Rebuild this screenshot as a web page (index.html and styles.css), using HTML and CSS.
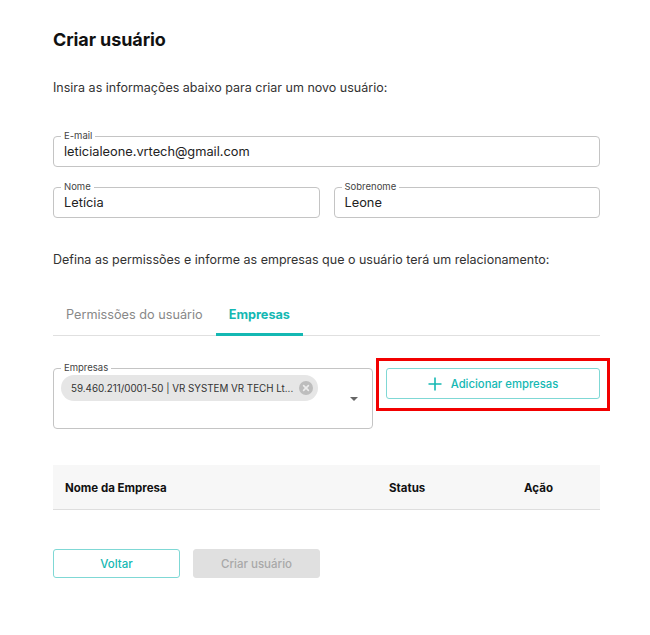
FILE: index.html
```html
<!DOCTYPE html>
<html lang="pt-BR">
<head>
<meta charset="utf-8">
<link rel="stylesheet" href="styles.css">
</head>
<body>
<main class="page">
  <h1 class="title">Criar usuário</h1>
  <p class="lead">Insira as informações abaixo para criar um novo usuário:</p>

  <fieldset class="field field-full">
    <legend>E-mail</legend>
    <div class="value">leticialeone.vrtech@gmail.com</div>
  </fieldset>

  <div class="row2">
    <fieldset class="field">
      <legend>Nome</legend>
      <div class="value">Letícia</div>
    </fieldset>
    <fieldset class="field">
      <legend>Sobrenome</legend>
      <div class="value">Leone</div>
    </fieldset>
  </div>

  <p class="lead lead2">Defina as permissões e informe as empresas que o usuário terá um relacionamento:</p>

  <div class="tabs">
    <div class="tab">Permissões do usuário</div>
    <div class="tab active">Empresas</div>
  </div>

  <div class="company-row">
    <fieldset class="field select">
      <legend>Empresas</legend>
      <div class="chip">
        <span class="chip-text">59.460.211/0001-50 | VR SYSTEM VR TECH Lt...</span>
        <svg class="chip-x" width="14" height="14" viewBox="0 0 14 14"><circle cx="7" cy="7" r="7" fill="#bdbdbd"/><path d="M4.6 4.6 L9.4 9.4 M9.4 4.6 L4.6 9.4" stroke="#ececec" stroke-width="1.6" stroke-linecap="round"/></svg>
      </div>
      <svg class="caret" width="8" height="4" viewBox="0 0 8 4"><path d="M0 0 H8 L4 4 Z" fill="#666"/></svg>
    </fieldset>
    <div class="add-wrap">
      <button class="btn-add">
        <svg width="14" height="14" viewBox="0 0 14 14"><path d="M7 0.5 V13.5 M0.5 7 H13.5" stroke="#14b8b3" stroke-width="1.6"/></svg>
        <span>Adicionar empresas</span>
      </button>
      <div class="highlight"></div>
    </div>
  </div>

  <div class="table-head">
    <div class="th th-name">Nome da Empresa</div>
    <div class="th th-status">Status</div>
    <div class="th th-action">Ação</div>
  </div>

  <div class="actions">
    <button class="btn btn-outline">Voltar</button>
    <button class="btn btn-disabled">Criar usuário</button>
  </div>
</main>
</body>
</html>
```

FILE: styles.css
```css
* { box-sizing: border-box; }
html, body { margin: 0; padding: 0; background: #fff; }
body {
  font-family: Inter, "Noto Sans", "Liberation Sans", sans-serif;
  color: #222;
}
.page {
  width: 547px;
  margin-left: 53px;
  padding-top: 28px;
}
.title {
  margin: 0;
  font-size: 18px;
  font-weight: 700;
  line-height: 24px;
  color: #111;
  letter-spacing: -0.1px;
}
.lead {
  margin: 28px 0 0;
  font-size: 12.5px;
  line-height: 16px;
  color: #333;
}
.field {
  margin: 0;
  border: 1px solid #c4c4c4;
  border-radius: 4px;
  padding: 0 10px 0 10px;
  height: 36px;
  min-width: 0;
}
.field legend {
  font-size: 9.5px;
  line-height: 10px;
  color: #444;
  padding: 0 3px;
  margin-left: -3px;
}
.field .value {
  font-size: 12.8px;
  line-height: 16px;
  color: #222;
  margin-top: 3px;
}
.field-full { margin-top: 35px; }
.row2 {
  display: grid;
  grid-template-columns: 1fr 1fr;
  gap: 14px;
  margin-top: 15px;
}
.lead2 { margin-top: 34px; }
.tabs {
  display: flex;
  margin-top: 26px;
  border-bottom: 1px solid #e0e0e0;
  height: 42px;
}
.tab {
  font-size: 12.7px;
  line-height: 16px;
  color: #888;
  padding: 13px 13px 0;
  height: 42px;
}
.tab.active {
  color: #14b8b3;
  font-weight: 700;
  border-bottom: 3px solid #14b8b3;
  margin-bottom: -1px;
}
.company-row {
  display: flex;
  align-items: flex-start;
  gap: 13px;
  margin-top: 27px;
}
.select {
  position: relative;
  width: 320px;
  height: 66px;
  flex: none;
  padding: 0 7px;
}
.select legend { margin-left: 0; }
.chip {
  display: inline-flex;
  align-items: center;
  height: 26px;
  background: #e6e6e6;
  border-radius: 13px;
  padding: 0 5px 0 10px;
  margin-top: 2px;
}
.chip-text {
  font-size: 9.8px;
  color: #333;
  margin-right: 6px;
  white-space: nowrap;
}
.chip-x { display: block; }
.caret {
  position: absolute;
  right: 14px;
  top: 24px;
}
.add-wrap {
  position: relative;
  flex: 1;
  margin-top: 5px;
}
.btn-add {
  width: 100%;
  height: 31px;
  border: 1px solid #7fd8d5;
  border-radius: 3px;
  background: #fff;
  color: #14b8b3;
  font-family: inherit;
  font-size: 11.3px;
  font-weight: 500;
  display: flex;
  align-items: center;
  justify-content: center;
  gap: 9px;
  padding: 0;
}
.btn-add svg { display: block; }
.highlight {
  position: absolute;
  left: -10px;
  right: -10px;
  top: -10px;
  bottom: -12px;
  border: 3px solid #f20000;
  pointer-events: none;
}
.table-head {
  display: flex;
  align-items: center;
  height: 45px;
  margin-top: 36px;
  background: #f7f7f7;
  border-bottom: 1px solid #dedede;
}
.th {
  font-size: 11.5px;
  font-weight: 700;
  color: #111;
  padding-top: 2px;
}
.th-name { margin-left: 12px; width: 324px; }
.th-status { width: 135px; }
.actions {
  display: flex;
  gap: 13px;
  margin-top: 39px;
}
.btn {
  width: 127px;
  height: 29px;
  border-radius: 3px;
  font-family: inherit;
  font-size: 11.5px;
  font-weight: 500;
}
.btn-outline {
  background: #fff;
  border: 1px solid #7fd8d5;
  color: #14b8b3;
}
.btn-disabled {
  background: #e0e0e0;
  border: 1px solid #e0e0e0;
  color: #a8a8a8;
}
```
